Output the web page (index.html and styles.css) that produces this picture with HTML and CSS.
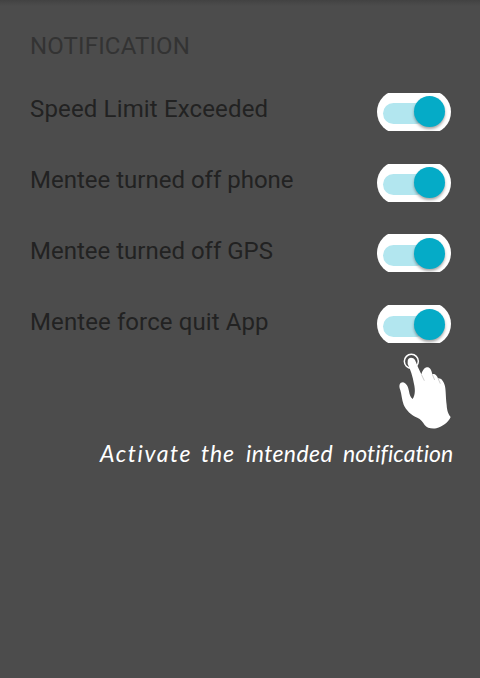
FILE: styles.css
```css
* { box-sizing: border-box; }
body { margin: 0; background: #4c4c4c; }
.screen {
  width: 480px;
  height: 678px;
  padding: 31px 27px 0 30px;
  display: flex;
  flex-direction: column;
  background: linear-gradient(#424242, #4c4c4c 6px);
  font-family: Roboto, sans-serif;
  overflow: hidden;
}
.heading {
  margin: 0;
  font-size: 24px;
  line-height: 30px;
  font-weight: 400;
  letter-spacing: .15px;
  color: #333;
}
.settings { list-style: none; margin: 15px 0 0; padding: 0; }
.row {
  height: 71px;
  display: flex;
  align-items: flex-start;
  justify-content: space-between;
  padding-top: 17px;
}
.label { margin-top: 1px; font-size: 24px; line-height: 30px; color: #222; white-space: nowrap; }
.wide { letter-spacing: .15px; }
.loose { letter-spacing: .1px; }
.switch {
  width: 74px;
  height: 38px;
  margin-right: 2px;
  padding-left: 6px;
  display: flex;
  align-items: center;
  background: #fff;
  clip-path: inset(-3px 0 -3px 0 round 22px);
}
.raised { margin-top: -1px; padding-top: 2px; }
.track {
  width: 44px;
  height: 21px;
  margin-top: 2px;
  border-radius: 11px;
  background: #b2e6ef;
}
.thumb {
  width: 31px;
  height: 31px;
  margin: -1px 0 0 -13px;
  border-radius: 50%;
  background: #05abc7;
  box-shadow: 0 2px 3px rgba(0, 0, 0, .35);
}
.hand { align-self: flex-end; flex: none; margin: -15px -12px 0 0; }
.hint {
  margin: 2px 0 0;
  display: grid;
  grid-template-columns: 101px 45px 97px 110px;
  justify-content: end;
  color: #fff;
  font: italic 400 23px/32px Lato, sans-serif;
  white-space: nowrap;
}
.w1 { letter-spacing: 1.6px; }
.w2 { letter-spacing: .8px; }
.w3 { letter-spacing: .4px; }
.w4 { letter-spacing: .05px; }
```

FILE: index.html
```html
<!DOCTYPE html>
<html lang="en">
<head>
<meta charset="utf-8">
<title>Notification settings</title>
<link rel="stylesheet" href="styles.css">
</head>
<body>
<main class="screen">
  <h1 class="heading">NOTIFICATION</h1>
  <ul class="settings">
    <li class="row"><span class="label wide">Speed Limit Exceeded</span><span class="switch"><span class="track"></span><span class="thumb"></span></span></li>
    <li class="row"><span class="label">Mentee turned off phone</span><span class="switch"><span class="track"></span><span class="thumb"></span></span></li>
    <li class="row"><span class="label">Mentee turned off GPS</span><span class="switch raised"><span class="track"></span><span class="thumb"></span></span></li>
    <li class="row"><span class="label loose">Mentee force quit App</span><span class="switch raised"><span class="track"></span><span class="thumb"></span></span></li>
  </ul>
  <svg class="hand" width="80" height="90" viewBox="0 0 240 270" aria-hidden="true">
    <circle cx="79" cy="49" r="21" fill="none" stroke="#fff" stroke-width="4.5"/>
    <path fill="#fff" d="M68 50C67 36 84 35 90 45C94 53 98 66 104 77L109 88C112 77 117 69 125 67C134 66 139 73 142 88C149 85 155 90 159 100C169 99 175 108 179 120C183 133 182 157 185 180C186 198 190 208 197 216C190 232 173 244 154 250C139 252 125 249 119 240C113 230 107 222 97 218C79 211 63 195 56 179C50 163 50 149 46 136C40 122 44 112 54 112C65 115 70 126 72 139C74 149 76 158 83 162C91 150 91 134 87 117C83 94 76 72 68 57Z"/>
    <path fill="none" stroke="#b5b5b5" stroke-width="2" d="M109 88L118 107M142 88L149 105M159 100L166 116"/>
  </svg>
  <p class="hint"><span class="w1">Activate</span><span class="w2">the</span><span class="w3">intended</span><span class="w4">notification</span></p>
</main>
</body>
</html>
```
